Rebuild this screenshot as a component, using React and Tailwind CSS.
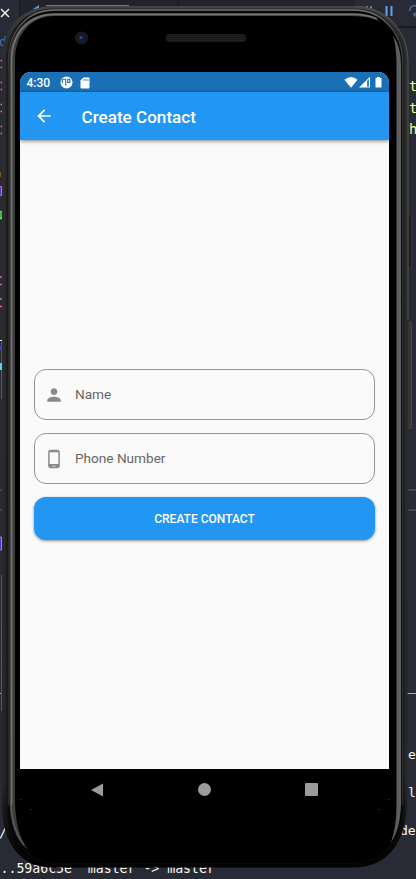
import React from "react";

const mono = "font-['DejaVu_Sans_Mono',monospace]";

const fragments = [
  { t: "d", c: "left-[-1px] top-[34px] text-[13px] text-[#4a6fc0]" },
  { t: "t", c: "left-[409px] top-[78px] text-[14px] text-[#f1fa8c]" },
  { t: "t", c: "left-[409px] top-[100px] text-[14px] text-[#f1fa8c]" },
  { t: "h", c: "left-[409px] top-[121px] text-[14px] text-[#f1fa8c]" },
  { t: "e", c: "left-[408px] top-[747px] text-[13px] text-[#f8f8f2]" },
  { t: "l", c: "left-[408px] top-[785px] text-[13px] text-[#f8f8f2]" },
  { t: "de", c: "left-[400px] top-[823px] text-[13px] text-[#f8f8f2]" },
  { t: "/", c: "left-[-1px] top-[825px] text-[13px] text-[#f8f8f2]" },
];

function Backdrop() {
  return (
    <div className={"absolute inset-0 overflow-hidden bg-[#282a36] leading-4 " + mono}>
      <div className="flex h-7 bg-[#21222c]">
        <div className="w-5 border-r border-[#191a21] bg-[#282a36]" />
        <div className="w-[159px] border-r border-[#191a21]" />
        <div className="w-[176px]" />
        <div className="grow border-b-2 border-[#191a21] bg-[#282a36]" />
      </div>
      <div className="absolute left-[46px] top-[5px] h-px w-[83px] bg-[#77777c]" />
      <svg className="absolute inset-0" width="416" height="879" fill="none">
        <path d="M1 9l8 8M9 9l-8 8" stroke="#f0f0e4" strokeWidth="1.500" />
        <path d="M33 9l6-4v4z" fill="#4f9bd8" />
        <path d="M386.500 6v10M391.500 6v10" stroke="#64a5e4" strokeWidth="2" />
        <path d="M367 6v3M371 6v4" stroke="#777" strokeWidth="2" />
        <path d="M409.500 11c1-6 6-7 9-3" stroke="#3d6994" strokeWidth="1.800" />
        <circle cx="415" cy="14.500" r="2" fill="#3d6994" />
        <path d="M0 490h416M0 510h416" stroke="#44475a" strokeWidth="2" />
        <path d="M0 693.500h416" stroke="#bd93f9" />
        <path d="M1.500 342v57M1.500 575v136" stroke="#55575c" />
        <path d="M0 340.500h2" stroke="#fff" />
        <path d="M0 363h2v7h-2z" fill="#50d8e8" />
        <path
          d="M2 60.500H.5M2 67.500H.5M2 82.500H.5M2 89.500H.5M2 104.500H.5M2 111.500H.5M2 126.500H.5M2 133.500H.5M2 277H0M2 284.500H0M2 299H0M2 306.500H0"
          stroke="#ff5cae"
          strokeWidth="1.400"
        />
        <path d="M0 211.500h1v6.500M0 218.500h2" stroke="#50fa5b" strokeWidth="1.300" />
        <path d="M-1 186.500h2.500v9h-2.500M-1 537h2.500v13h-2.500" fill="#4b38c0" stroke="#ff55c8" />
        <path d="M0 172v5" stroke="#7a572e" strokeWidth="2" />
        <path d="M0 346v4" stroke="#343ed8" strokeWidth="3" />
      </svg>
      {fragments.map((f, i) => (
        <span key={i} className={"absolute " + f.c}>{f.t}</span>
      ))}
      <span className="absolute left-[0.500px] top-[861px] whitespace-pre text-[13.200px] text-[#f8f8f2]">
        ..59a6c5e  master -&gt; master
      </span>
    </div>
  );
}

function Bezel() {
  return (
    <svg className="absolute inset-0" width="416" height="879" fill="none">
      <defs>
        <linearGradient id="rim" gradientUnits="userSpaceOnUse" x1="0" y1="6" x2="0" y2="868">
          <stop offset="0" stopColor="#444" />
          <stop offset="0.04" stopColor="#2e2e2e" />
          <stop offset="0.9" stopColor="#262626" />
          <stop offset="0.98" stopColor="#060606" />
          <stop offset="1" stopColor="#000" />
        </linearGradient>
        <linearGradient id="inner" gradientUnits="userSpaceOnUse" x1="0" y1="6" x2="0" y2="868">
          <stop offset="0" stopColor="#222" />
          <stop offset="0.9" stopColor="#1d1d1d" />
          <stop offset="0.98" stopColor="#030303" />
        </linearGradient>
        <linearGradient id="ring" gradientUnits="userSpaceOnUse" x1="0" y1="6" x2="0" y2="850">
          <stop offset="0" stopColor="#7a7a7a" />
          <stop offset="0.03" stopColor="#4a4a4a" />
          <stop offset="0.08" stopColor="#303030" />
          <stop offset="0.94" stopColor="#2a2a2a" />
          <stop offset="1" stopColor="#000" />
        </linearGradient>
        <pattern id="mesh" width="2" height="2" patternUnits="userSpaceOnUse">
          <rect width="2" height="2" fill="#191919" />
          <rect width="1" height="1" fill="#262626" />
        </pattern>
      </defs>
      <path d="M408 215h2.500q1 0 1 1v51q0 1-1 1H408z" fill="#1c1c1c" stroke="#444" strokeWidth=".6" />
      <path d="M408 322h2q1.500 0 1.500 1.500v104q0 1-1 1H408z" fill="#383736" stroke="#555" strokeWidth=".6" />
      <path d="M54 6H354C386 6 408.500 29 408.500 62V500Q408 640 407 800C407 842 388 867.500 354 867.500H52C20 867.500 2 842 2 805V60C2 27 22 6 54 6Z" fill="url(#rim)" />
      <path d="M356 6.500C386 7 408 30 408 62V320" stroke="#55534f" />
      <path d="M5.500 805V60C5.500 29 25 8.500 54 8.500H354C384 8.500 405 31 405 62V805C405 840 386 865.500 354 865.500H54C24 865.500 5.500 840 5.500 805Z" fill="url(#inner)" />
      <path d="M7.500 805V60C7.500 30 26 9.500 54 9.500H354C383 9.500 403 32 403 62V805C403 838 384 864 354 864H54C26 864 7.500 838 7.500 805Z" fill="#080808" />
      <path d="M8.500 805V61C8.500 31 27 10 55 10H354C382 10 402.500 32 402.500 62V805" stroke="url(#ring)" strokeWidth="1.400" />
      <path d="M10 805V61C10 32 28 12.500 55 12.500H354C382 12.500 401 33 401 62V805C401 836 383 863 354 863H55C28 863 10 836 10 805Z" fill="#000" />
      <path d="M9.500 800V61C9.500 31 28 13 55 13H352Q371 13 381 22Q370 16 352 16H55C31 16 15 34 15 61V800Q15 832 28 850Q9.500 835 9.500 800Z" fill="#3c3c3c" />
      <path d="M11.500 805V61C11.500 33 29 14.300 55 14.300H352Q369 14.300 377 19" stroke="#737373" strokeWidth="1.700" />
      <path d="M11 803Q12 830 24 845" stroke="#5a5a5a" strokeWidth="1.500" />
      <path d="M393 36Q401 46 401 65V805Q400 830 391 842Q396.500 828 396.500 805V65Q396.500 46 393 36Z" fill="#5c5e60" />
      <circle cx="81.500" cy="38" r="6.500" fill="#1a1a1b" />
      <circle cx="81.500" cy="38" r="3.500" fill="#111d3f" />
      <circle cx="81" cy="37.500" r="1.500" fill="#35477d" />
      <rect x="166" y="34" width="80" height="8" rx="3.500" fill="url(#mesh)" />
      <path d="M20.500 799.500h.6M30.500 809.500h.6M388.500 799.500h.6M378.500 809.500h.6" stroke="#777" />
    </svg>
  );
}

function StatusBar() {
  return (
    <div className="flex h-5 items-center bg-[#1a70b7] pl-[6.500px] pr-[6px] pt-px text-white">
      <span className="w-[33px] text-[12px] font-medium leading-5">4:30</span>
      <svg width="13" height="13" viewBox="0 0 13 13">
        <circle cx="6.500" cy="6.500" r="6" fill="#fff" />
        <path d="M5.700 2.700V9.500M2.300 7.200V3.200H5.700M7.800 3.200H9.800V6.500H7.800Z" fill="none" stroke="#1a70b7" strokeWidth="1.100" />
      </svg>
      <svg className="ml-[7px]" width="10" height="12" viewBox="0 0 10 12">
        <path d="M3.500.5H8.500Q9.500.5 9.500 1.500V10.500Q9.500 11.500 8.500 11.500H1.500Q.5 11.500.5 10.500V3.500Z" fill="#fff" />
        <path d="M4 2v2M6 2v2M8 2v2" stroke="#1a70b7" strokeWidth=".8" />
      </svg>
      <div className="grow" />
      <svg width="40" height="13" viewBox="0 0 40 13">
        <path d="M1.500 3.700Q8-1.800 14.500 3.700L8 11.700Z" fill="#fff" />
        <path d="M27 .7V11.500H16Z" fill="#fff" />
        <path d="M24 5L26 3V10.700H24Z" fill="#3d83be" />
        <path d="M34 1h3v1H38.500V11.500H32.500V2H34Z" fill="#fff" />
      </svg>
    </div>
  );
}

function Field({ icon, label }) {
  return (
    <div className="flex h-[51px] items-center rounded-[12px] border border-[#969696] pl-[9px] text-[13.600px] text-[#666]">
      <svg width="20" height="20" viewBox="0 0 24 24" fill="#898989">
        <path d={icon} />
      </svg>
      <span className="ml-[11px]">{label}</span>
    </div>
  );
}

const personIcon =
  "M12 12c2.210 0 4-1.790 4-4s-1.790-4-4-4-4 1.790-4 4 1.790 4 4 4zm0 2c-2.670 0-8 1.340-8 4v2h16v-2c0-2.660-5.330-4-8-4z";
const phoneIcon =
  "M16 1H8C6.340 1 5 2.340 5 4v16c0 1.660 1.340 3 3 3h8c1.660 0 3-1.340 3-3V4c0-1.660-1.340-3-3-3zm-2 20h-4v-1h4v1zm3.250-3H6.750V4h10.500v14z";

function Screen() {
  return (
    <div className="flex h-[697px] w-[369px] flex-col overflow-hidden rounded-t-[11px] bg-[#fafafa]">
      <StatusBar />
      <header className="relative flex h-12 items-center bg-[#2196f3] pl-[14px] text-white shadow-[0_1px_4px_rgba(0,0,0,0.5)]">
        <svg width="20" height="20" viewBox="0 0 24 24" fill="#fff">
          <path d="M20 11H7.830l5.590-5.590L12 4l-8 8 8 8 1.410-1.410L7.830 13H20v-2z" />
        </svg>
        <h1 className="ml-[27.500px] pt-[3px] text-[17.100px] font-medium">Create Contact</h1>
      </header>
      <main className="flex grow flex-col justify-center gap-[13px] px-[14px]">
        <Field icon={personIcon} label="Name" />
        <Field icon={phoneIcon} label="Phone Number" />
        <button className="h-[43px] rounded-[12px] bg-[#2196f3] text-[12px] font-medium text-white shadow-[0_1px_3px_rgba(0,0,0,0.45)]">
          CREATE CONTACT
        </button>
      </main>
    </div>
  );
}

function NavBar() {
  return (
    <nav className="flex h-[41px] items-center pl-[70px]">
      <svg width="14" height="14" viewBox="0 0 14 14"><path d="M1 7L13 .5V13.500Z" fill="#9b9b9b" /></svg>
      <div className="ml-[94px] size-[13px] rounded-full bg-[#9b9b9b]" />
      <div className="ml-[94px] size-[13px] rounded-[1px] bg-[#9b9b9b]" />
    </nav>
  );
}

export default function App() {
  return (
    <div className="relative h-[879px] w-[416px] overflow-hidden font-[Roboto,sans-serif]">
      <Backdrop />
      <Bezel />
      <div className="relative pl-5 pt-[72px]">
        <Screen />
        <NavBar />
      </div>
    </div>
  );
}
